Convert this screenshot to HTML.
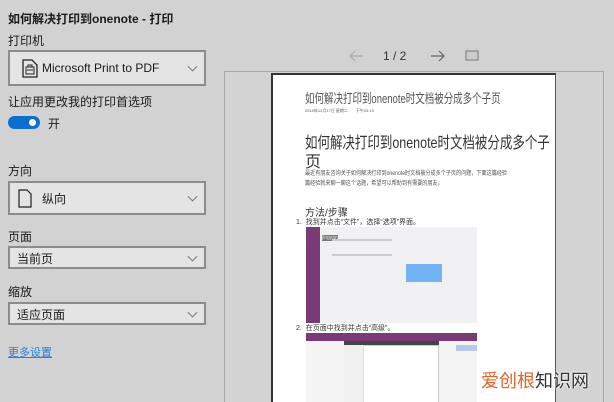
<!DOCTYPE html>
<html><head><meta charset="utf-8"><style>
*{margin:0;padding:0;box-sizing:border-box}
html,body{width:614px;height:402px;overflow:hidden}
body{background:#d2d2d2;font-family:"Liberation Sans","Noto Sans CJK SC",sans-serif;color:#1a1a1a;position:relative}
.a{position:absolute;white-space:nowrap}
.dd{position:absolute;left:8px;width:198px;background:#e4e4e4;border:2px solid #8c8c8c}
.chev{position:absolute;right:8px;top:50%;width:7px;height:7px;border-right:1px solid #777;border-bottom:1px solid #777;transform:translateY(-70%) rotate(45deg)}
.lbl{font-size:12px}
.t{color:#555}
.sx{transform-origin:0 0}
</style></head><body>
<div class="a" style="left:8px;top:10px;font-size:12px;font-weight:bold">如何解决打印到onenote - 打印</div>
<div class="a lbl" style="left:8px;top:32px">打印机</div>
<div class="dd" style="top:50px;height:36px">
<svg class="a" style="left:12px;top:7px" width="16" height="19" viewBox="0 0 16 19"><path d="M1 1h9l5 5v12H1z" fill="none" stroke="#222" stroke-width="1.3"/><rect x="4" y="8" width="8" height="7" fill="none" stroke="#222"/><path d="M6 8V6h4v2M5 11h6" stroke="#222" fill="none"/></svg>
<div class="a" style="left:32px;top:9px;font-size:12px">Microsoft Print to PDF</div><div class="chev"></div></div>
<div class="a lbl" style="left:8px;top:93px">让应用更改我的打印首选项</div>
<div class="a" style="left:8px;top:116px;width:32px;height:13px;border-radius:7px;background:#0b6fd0"><div class="a" style="right:4px;top:3px;width:7px;height:7px;border-radius:50%;background:#fff"></div></div>
<div class="a lbl" style="left:48px;top:115px">开</div>
<div class="a lbl" style="left:8px;top:162px">方向</div>
<div class="dd" style="top:181px;height:34px">
<svg class="a" style="left:8px;top:6px" width="14" height="19" viewBox="0 0 14 19"><path d="M1 1h8l4 4v13H1z" fill="none" stroke="#222" stroke-width="1.2"/></svg>
<div class="a" style="left:32px;top:7px;font-size:12px">纵向</div><div class="chev"></div></div>
<div class="a lbl" style="left:8px;top:228px">页面</div>
<div class="dd" style="top:246px;height:23px"><div class="a" style="left:7px;top:2px;font-size:12px">当前页</div><div class="chev"></div></div>
<div class="a lbl" style="left:8px;top:283px">缩放</div>
<div class="dd" style="top:302px;height:23px"><div class="a" style="left:7px;top:2px;font-size:12px">适应页面</div><div class="chev"></div></div>
<div class="a" style="left:8px;top:344px;font-size:11px;color:#2b7fd6;text-decoration:underline">更多设置</div>
<svg class="a" style="left:348px;top:50px" width="16" height="12" viewBox="0 0 16 12"><path d="M15 6H2M7 1L2 6l5 5" fill="none" stroke="#aaa" stroke-width="1.2"/></svg>
<div class="a" style="left:383px;top:49px;font-size:12px;color:#333">1 / 2</div>
<svg class="a" style="left:430px;top:50px" width="16" height="12" viewBox="0 0 16 12"><path d="M1 6h13M9 1l5 5-5 5" fill="none" stroke="#666" stroke-width="1.2"/></svg>
<svg class="a" style="left:465px;top:50px" width="14" height="11" viewBox="0 0 14 11"><rect x="1" y="1" width="12" height="9" fill="#ccc" stroke="#777"/></svg>
<div class="a" style="left:224px;top:71px;width:380px;height:340px;background:#d3d3d3;border:1px solid #a8a8a8"></div>
<div class="a" style="left:271px;top:73px;width:285px;height:340px;background:#fff;border-left:2px solid #333;border-top:2px solid #333;border-right:1px solid #555"></div>
<div class="a t sx" style="left:305px;top:88px;font-size:13px;transform:scaleX(0.73)">如何解决打印到onenote时文档被分成多个子页</div>
<div class="a t" style="left:305px;top:108px;font-size:4px">2019年12月17日 星期二 &nbsp;&nbsp;&nbsp;&nbsp;&nbsp; 下午03:13</div>
<div class="a sx" style="left:305px;top:129px;font-size:16px;color:#333;transform:scaleX(0.78)">如何解决打印到onenote时文档被分成多个子</div>
<div class="a" style="left:305px;top:148px;font-size:16px;color:#333">页</div>
<div class="a t sx" style="left:305px;top:169px;font-size:6px;line-height:10px;transform:scaleX(0.85)">最近有朋友咨询关于如何解决打印到onenote时文档被分成多个子页的问题，下面这篇经验<br>篇经验就来聊一聊这个话题，希望可以帮助到有需要的朋友。</div>
<div class="a" style="left:305px;top:204px;font-size:10px;color:#333">方法/步骤</div>
<div class="a" style="left:296px;top:217px;font-size:7px;color:#333">1. &nbsp;找到并点击“文件”，选择“选项”界面。</div>
<div class="a" style="left:306px;top:227px;width:171px;height:96px;background:#f1f1f3"><div class="a" style="left:0;top:0;width:14px;height:96px;background:#7a3a78"></div>
<div class="a" style="left:16px;top:8px;font-size:5px;color:#ddd;background:#777">jingyan</div>
<div class="a" style="left:26px;top:12px;width:60px;height:2px;background:#ccc"></div>
<div class="a" style="left:26px;top:27px;width:60px;height:2px;background:#ccc"></div>
<div class="a" style="left:100px;top:37px;width:36px;height:18px;background:#72b2f3"></div></div>
<div class="a" style="left:296px;top:323px;font-size:7px;color:#333">2. &nbsp;在页面中找到并点击“高级”。</div>
<div class="a" style="left:306px;top:333px;width:171px;height:70px;background:#f4f4f4">
<div class="a" style="left:0;top:0;width:171px;height:8px;background:#7a3a78"></div>
<div class="a" style="left:38px;top:8px;width:95px;height:4px;background:#444"></div>
<div class="a" style="left:38px;top:12px;width:95px;height:60px;background:#fff;border:1px solid #ccc"></div>
<div class="a" style="left:38px;top:12px;width:20px;height:60px;background:#f0f0f0;border-right:1px solid #ddd"></div>
<div class="a" style="left:150px;top:12px;width:21px;height:6px;background:#b8c8e8"></div></div>
<div class="a" style="left:481px;top:367px;font-size:18px;color:#e0652a;font-family:'Noto Sans CJK SC',sans-serif">爱创根<span style="color:#333;text-shadow:0 0 2px #fff,0 0 2px #fff">知识网</span></div>
</body></html>
